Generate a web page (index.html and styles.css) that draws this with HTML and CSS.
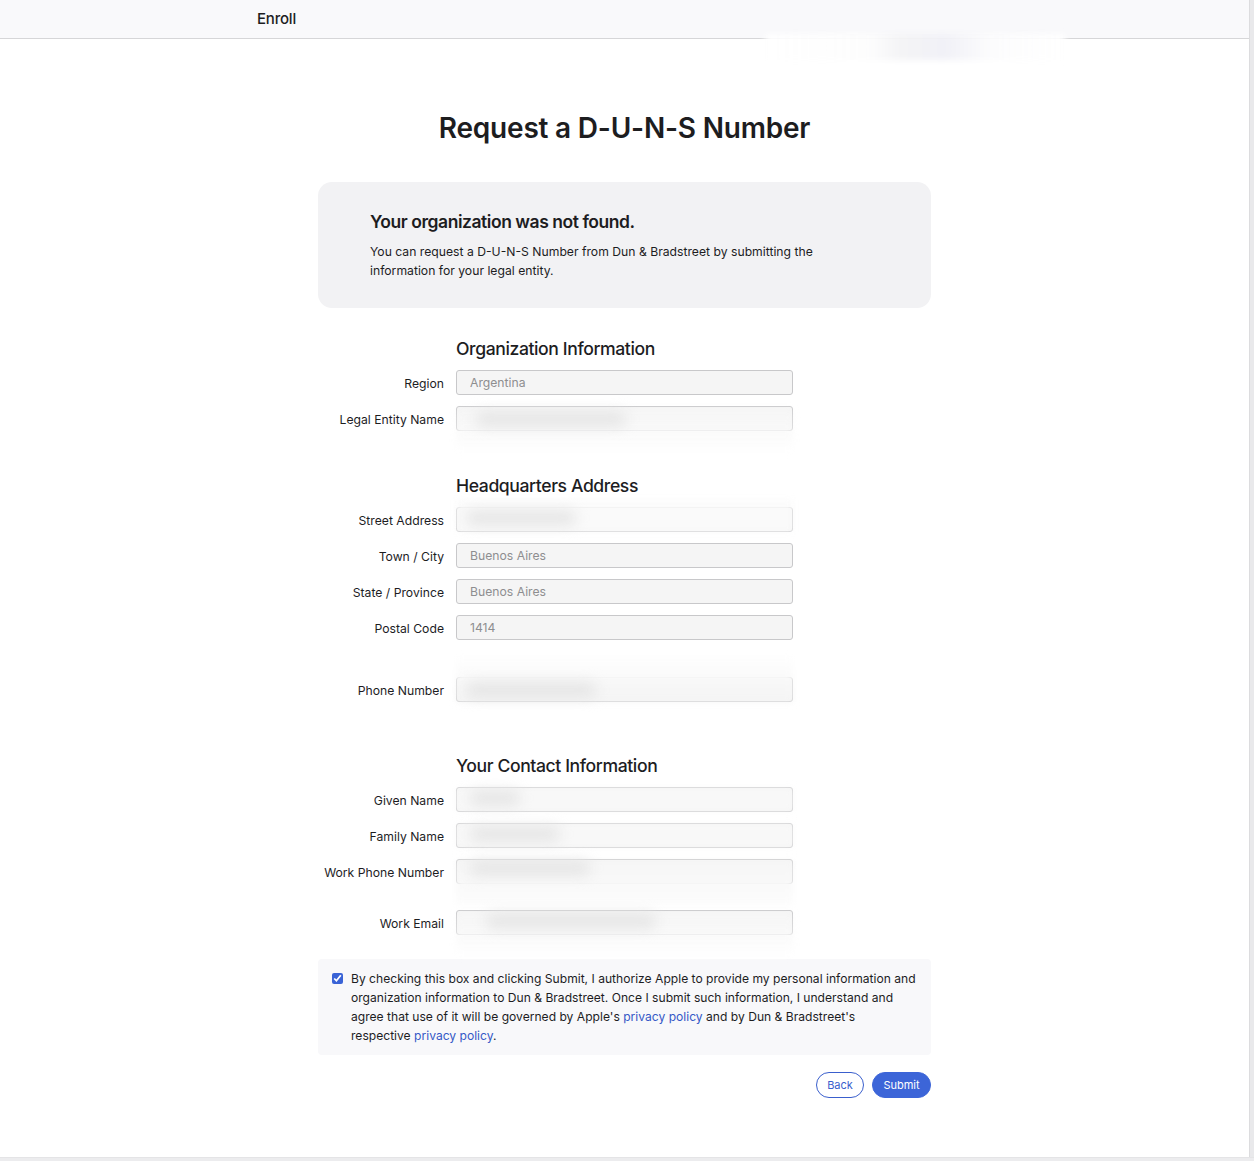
FILE: index.html
```html
<!DOCTYPE html>
<html lang="en">
<head>
<meta charset="utf-8">
<title>Request a D-U-N-S Number</title>
<link rel="stylesheet" href="styles.css">
</head>
<body>
<div class="page">
  <div class="main">
    <header class="topbar">
      <div class="topbar-inner">Enroll</div>
      <div class="fog fog-top"></div>
    </header>

    <main class="content">
      <h1 class="title">Request a D-U-N-S Number</h1>

      <section class="notice">
        <h2 class="notice-title">Your organization was not found.</h2>
        <p class="notice-text">You can request a D-U-N-S Number from Dun &amp; Bradstreet by submitting the information for your legal entity.</p>
      </section>

      <form class="form">
        <div class="group group-org">
          <h3 class="group-title">Organization Information</h3>
          <label class="label">Region</label>
          <div class="field"><input class="input" value="Argentina" readonly></div>
          <label class="label">Legal Entity Name</label>
          <div class="field"><input class="input" readonly><span class="fog fog-wide"></span><span class="smudge s1"></span></div>
        </div>

        <div class="group group-hq">
          <h3 class="group-title">Headquarters Address</h3>
          <label class="label">Street Address</label>
          <div class="field"><input class="input" readonly><span class="fog fog-up"></span><span class="smudge s2"></span></div>
          <label class="label">Town / City</label>
          <div class="field"><input class="input" value="Buenos Aires" readonly></div>
          <label class="label">State / Province</label>
          <div class="field"><input class="input" value="Buenos Aires" readonly></div>
          <label class="label">Postal Code</label>
          <div class="field"><input class="input" value="1414" readonly></div>
          <div class="spacer"></div>
          <label class="label">Phone Number</label>
          <div class="field"><input class="input" readonly><span class="fog fog-above"></span><span class="smudge s3"></span></div>
        </div>

        <div class="group group-contact">
          <h3 class="group-title">Your Contact Information</h3>
          <label class="label">Given Name</label>
          <div class="field"><input class="input" readonly><span class="fog fog-plain"></span><span class="smudge s4"></span></div>
          <label class="label">Family Name</label>
          <div class="field"><input class="input" readonly><span class="fog fog-plain"></span><span class="smudge s5"></span></div>
          <label class="label">Work Phone Number</label>
          <div class="field"><input class="input" readonly><span class="fog fog-tall"></span><span class="smudge s6"></span></div>
          <label class="label label-email">Work Email</label>
          <div class="field field-email"><input class="input" readonly><span class="fog fog-wide"></span><span class="smudge s7"></span></div>
        </div>

        <div class="consent">
          <input type="checkbox" class="check" checked>
          <p class="consent-text">By checking this box and clicking Submit, I authorize Apple to provide my personal information and organization information to Dun &amp; Bradstreet. Once I submit such information, I understand and agree that use of it will be governed by Apple's <a href="#" class="link">privacy policy</a> and by Dun &amp; Bradstreet's respective <a href="#" class="link">privacy policy</a>.</p>
        </div>

        <div class="actions">
          <button type="button" class="btn btn-outline">Back</button>
          <button type="button" class="btn btn-primary">Submit</button>
        </div>
      </form>
    </main>
  </div>
  <div class="edge"></div>
</div>
</body>
</html>
```

FILE: styles.css
```css
html, body {
  margin: 0;
  padding: 0;
}

body {
  background: #ececee;
  font-family: Inter, "Noto Sans", "Liberation Sans", sans-serif;
  color: #1d1d1f;
  -webkit-font-smoothing: antialiased;
}

.page {
  display: flex;
  height: 1157px;
  background: #ffffff;
  border-bottom: 1px solid #e4e4e6;
}

.main {
  flex: 1;
  display: flex;
  flex-direction: column;
}

.edge {
  width: 4px;
  background: #e9e9eb;
  border-left: 1px solid #dcdcde;
  box-shadow: -22px 0 26px -6px rgba(0, 0, 0, 0.05);
}

/* top navigation bar */
.topbar {
  position: relative;
  height: 38px;
  background: #f9f9fb;
  border-bottom: 1px solid #d6d6d8;
}

.topbar-inner {
  padding-left: 257px;
  line-height: 37px;
  font-size: 15px;
  font-weight: 500;
  color: #1d1d1f;
  letter-spacing: -0.2px;
}

/* redaction haze */
.fog {
  position: absolute;
  pointer-events: none;
  background: rgba(255, 255, 255, 0.92);
  filter: blur(3px);
}

.fog-top {
  left: 765px;
  top: 34px;
  width: 300px;
  height: 26px;
  background: linear-gradient(90deg, rgba(255,255,255,0.95) 0%, #fdfdfd 35%, #f4f4f6 45%, #f1f1f7 60%, #fcfcfd 75%, rgba(255,255,255,0.95) 100%);
}

.content {
  width: 613px;
  margin: 0 auto;
  padding-top: 72px;
}

.title {
  margin: 0 0 37px;
  text-align: center;
  font-size: 28px;
  line-height: 34px;
  font-weight: 600;
  letter-spacing: -0.2px;
  color: #1d1d1f;
}

.notice {
  background: #f2f2f4;
  border-radius: 14px;
  padding: 29px 52px 28px;
}

.notice-title {
  margin: 0 0 9px;
  font-size: 17.5px;
  line-height: 22px;
  font-weight: 600;
  letter-spacing: -0.45px;
}

.notice-text {
  margin: 0;
  font-size: 12.2px;
  line-height: 19px;
  color: #1d1d1f;
  padding-right: 50px;
}

.form {
  display: flex;
  flex-direction: column;
}

.group {
  display: grid;
  grid-template-columns: 126px 337px;
  column-gap: 12px;
  row-gap: 11px;
  align-items: center;
}

.group-org { margin-top: 30px; }
.group-hq { margin-top: 44px; }
.group-contact { margin-top: 53px; }

.group-title {
  grid-column: 2;
  margin: 0 0 -1px;
  font-size: 17.6px;
  line-height: 22px;
  font-weight: 500;
  letter-spacing: -0.4px;
  color: #1d1d1f;
}

.label {
  grid-column: 1;
  text-align: right;
  font-size: 12.2px;
  color: #1d1d1f;
  white-space: nowrap;
  padding-top: 1px;
}

.field {
  grid-column: 2;
  position: relative;
  height: 25px;
}

.spacer {
  grid-column: 1 / 3;
  height: 15px;
}

.label-email,
.field-email {
  margin-top: 15px;
}

.input {
  box-sizing: border-box;
  width: 100%;
  height: 25px;
  margin: 0;
  padding: 0 13px;
  border: 1px solid #c8c8ca;
  border-radius: 3px;
  background: #f5f5f5;
  font-family: inherit;
  font-size: 12.2px;
  color: #8e8e90;
  outline: none;
}

.fog-wide {
  left: 0;
  right: 0;
  top: 2px;
  height: 44px;
  background: linear-gradient(180deg, rgba(248,248,248,0.3) 0%, rgba(250,250,250,0.85) 60%, rgba(255,255,255,0.9) 100%);
}

.fog-up {
  left: 0;
  right: 0;
  top: -7px;
  height: 32px;
  background: rgba(250, 250, 250, 0.85);
}

.fog-above {
  left: 0;
  right: 0;
  top: -22px;
  height: 47px;
  background: linear-gradient(180deg, rgba(255,255,255,0.9) 0%, rgba(248,248,248,0.9) 60%, rgba(244,244,244,0.9) 100%);
}

.fog-plain {
  left: 0;
  right: 0;
  top: 1px;
  height: 23px;
  background: rgba(248, 248, 248, 0.9);
}

.fog-tall {
  left: 0;
  right: 0;
  top: 2px;
  height: 44px;
  background: linear-gradient(180deg, rgba(246,246,246,0.9) 0%, rgba(252,252,252,0.9) 100%);
}

.smudge {
  position: absolute;
  top: 4px;
  height: 14px;
  border-radius: 8px;
  background: #e4e4e4;
  filter: blur(7px);
  pointer-events: none;
}

.s1 { left: 20px; width: 150px; top: 6px; }
.s2 { left: 10px; width: 110px; }
.s3 { left: 10px; width: 130px; top: 6px; }
.s4 { left: 14px; width: 50px; }
.s5 { left: 14px; width: 90px; }
.s6 { left: 14px; width: 120px; top: 2px; }
.s7 { left: 30px; width: 170px; top: 4px; }

.consent {
  display: flex;
  align-items: flex-start;
  gap: 8px;
  margin-top: 24px;
  padding: 10px 15px 10px 14px;
  background: #f8f8fa;
  border-radius: 4px;
}

.check {
  flex: none;
  width: 11px;
  height: 11px;
  margin: 4px 0 0;
  accent-color: #3a63d6;
}

.consent-text {
  margin: 0;
  font-size: 12.1px;
  line-height: 19px;
  color: #1d1d1f;
}

.link {
  color: #3559c7;
  text-decoration: none;
}

.actions {
  display: flex;
  justify-content: flex-end;
  gap: 8px;
  margin-top: 17px;
}

.btn {
  box-sizing: border-box;
  height: 26px;
  border-radius: 13px;
  font-family: inherit;
  font-size: 11px;
  cursor: pointer;
  padding: 0 10px;
}

.btn-outline {
  width: 48px;
  background: #ffffff;
  border: 1px solid #3a5fcd;
  color: #3a5fcd;
}

.btn-primary {
  width: 59px;
  background: #3c65d8;
  border: 1px solid #3c65d8;
  color: #ffffff;
}
```
